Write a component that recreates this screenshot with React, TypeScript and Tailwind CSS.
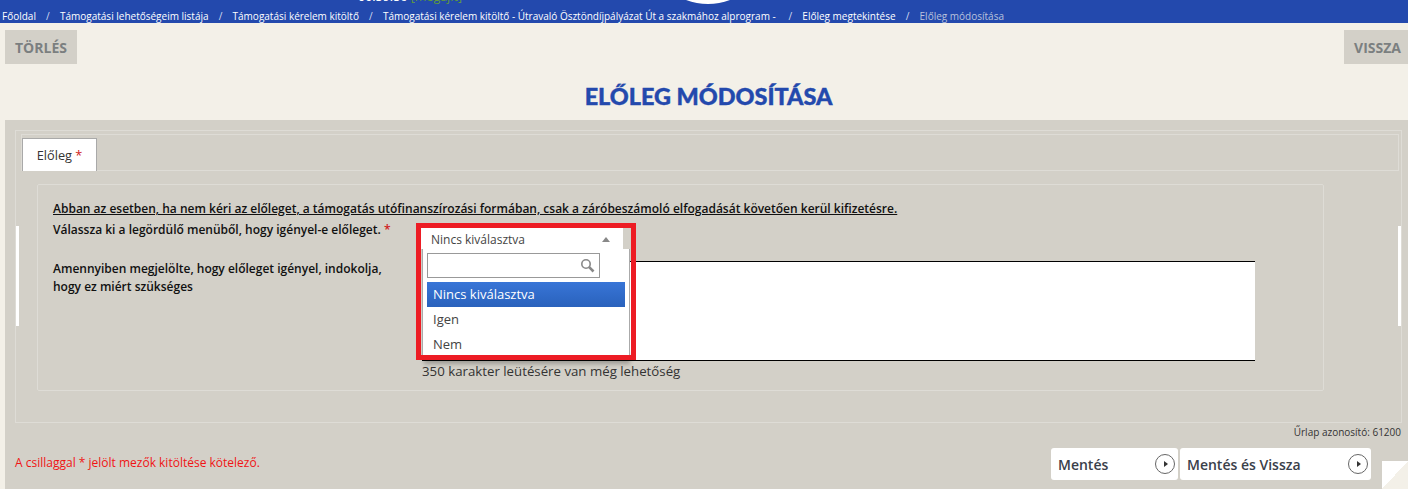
import React from 'react';

const crumbs = [
  'Főoldal',
  'Támogatási lehetőségeim listája',
  'Támogatási kérelem kitöltő',
  'Támogatási kérelem kitöltő - Útravaló Ösztöndíjpályázat Út a szakmához alprogram -\u00a0',
  'Előleg megtekintése',
];

function SaveButton({ label, width }: { label: string; width: string }) {
  return (
    <button className={`${width} h-8 bg-white rounded-[3px] flex items-center justify-between pl-[7px] pr-[3px] text-[14px] font-semibold text-[#3a404a]`}>
      <span>{label}</span>
      <span className="w-5 h-5 rounded-full border border-[#666] flex items-center justify-center">
        <span className="w-0 h-0 border-y-[3px] border-y-transparent border-l-[4px] border-l-[#333] ml-px" />
      </span>
    </button>
  );
}

export default function App() {
  return (
    <div className="relative w-[1408px] h-[489px] overflow-hidden bg-[#f3f0e8] font-['Open_Sans',sans-serif] text-[#222]">
      {/* top bar, the rest is scrolled off */}
      <div className="relative h-[23px] bg-[#2349ad] overflow-hidden">
        <div className="absolute left-[358px] top-[-12px] text-[12.5px] text-white whitespace-nowrap">
          00:59:56 <span className="text-[#5f9a3c]">[megajit]</span>
        </div>
        <div className="absolute left-[646px] top-[-120px] w-[124px] h-[124px] rounded-full bg-white" />
        <div className="flex items-center pl-[2px] pt-[9px] h-[23px] text-[10px] leading-[13px] text-white whitespace-nowrap">
          {crumbs.map((c) => (
            <React.Fragment key={c}>
              <span>{c}</span>
              <span className="w-[24px] text-center text-[#d5dcf0]">/</span>
            </React.Fragment>
          ))}
          <span className="text-[#b9c2dc]">Előleg módosítása</span>
        </div>
      </div>

      <div className="flex justify-between pl-[5px] pt-[7px]">
        <div className="w-[72px] h-[34px] bg-[#d3d0c8] flex items-center justify-center text-[14px] font-bold text-[#7b7f80]">TÖRLÉS</div>
        <div className="w-[64px] h-[34px] bg-[#d3d0c8] flex items-center justify-center pl-[3px] text-[14px] font-bold text-[#7b7f80]">VISSZA</div>
      </div>

      <h1 className="h-[56px] pt-[10px] flex items-center justify-center pl-[9px] font-['Lato',sans-serif] font-black text-[23.4px] text-[#2349ad] [-webkit-text-stroke:0.4px_#2349ad]">
        ELŐLEG MÓDOSÍTÁSA
      </h1>

      <div className="relative ml-[5px] h-[369px] bg-[#d3d0c8] pt-[10px]">
        <div className="relative ml-[10px] w-[1387px] h-[293px] border border-[#dedcd6] pt-[3px]">
          {/* white handles at the edges of the fieldset */}
          <div className="absolute left-0 top-[95px] w-[3px] h-[100px] bg-white" />
          <div className="absolute right-0 top-[95px] w-[3px] h-[100px] bg-white" />

          {/* tab strip */}
          <div className="ml-[5px] w-[1378px] h-[37px] border border-[#dedcd6] pt-[3px]">
            <div className="w-[75px] h-[33px] pt-[2px] bg-white border border-[#a9a9a9] border-b-0 flex items-center justify-center text-[12.75px] text-[#333]">
              <span>Előleg <span className="text-[#d01c1c]">*</span></span>
            </div>
          </div>

          {/* form box */}
          <div className="relative ml-[21px] mt-[13px] w-[1287px] h-[207px] border border-[#dedcd6] rounded-[2px] pl-[15px] pt-[14px] text-[12px] font-semibold">
            <div className="h-[21px] leading-[20px] underline whitespace-nowrap text-[#111]">
              Abban az esetben, ha nem kéri az előleget, a támogatás utófinanszírozási formában, csak a záróbeszámoló elfogadását követően kerül kifizetésre.
            </div>
            <div className="h-[20px] leading-[20px] whitespace-nowrap text-[#111]">
              Válassza ki a legördülő menüből, hogy igényel-e előleget. <span className="text-[#d01c1c]">*</span>
            </div>
            <div className="mt-[20px] leading-[18px] text-[#111]">
              Amennyiben megjelölte, hogy előleget igényel, indokolja,
              <br />
              hogy ez miért szükséges
            </div>

            {/* textarea behind the open dropdown */}
            <div className="absolute left-[384px] top-[76px] w-[833px] h-[100px] bg-white border-y border-black" />
            <div className="absolute left-[384px] top-[177px] text-[13.25px] font-normal text-[#333] whitespace-nowrap">
              350 karakter leütésére van még lehetőség
            </div>

            {/* list shadow shows under the red frame */}
            <div className="absolute left-[386px] top-[165px] w-[206px] h-[11px] shadow-[0_3px_4px_rgba(0,0,0,0.25)]" />

            {/* chosen style select */}
            <div className="absolute left-[378px] top-[38px] w-[220px] h-[137px] border-[5px] border-[#ed1c24] z-10 font-normal">
              <div className="w-[202px] h-[21px] bg-white flex items-center justify-between pl-[10px] pr-[13px] pt-[3px] text-[12px] text-[#444]">
                <span>Nincs kiválasztva</span>
                <span className="w-0 h-0 border-x-[4px] border-x-transparent border-b-[5px] border-b-[#888] mb-[2px]" />
              </div>
              <div className="ml-px w-[208px] h-[106px] bg-white border-x border-[#aaa] px-[4px] pt-[4px] text-[13px] text-[#444]">
                <div className="w-[173px] h-[25px] border border-[#999] flex items-center justify-end pr-[4px]">
                  <svg width="15" height="15" viewBox="0 0 15 15" fill="none" stroke="#888">
                    <circle cx="6" cy="6" r="4.2" strokeWidth="1.6" />
                    <line x1="9.2" y1="9.2" x2="13.5" y2="13.5" strokeWidth="2.6" />
                  </svg>
                </div>
                <div className="mt-[4px] w-[198px] h-[25px] flex items-center pl-[6px] text-white bg-gradient-to-b from-[#3875d7] to-[#2a62bc]">
                  Nincs kiválasztva
                </div>
                <div className="h-[25px] flex items-center pl-[6px]">Igen</div>
                <div className="h-[25px] flex items-center pl-[6px]">Nem</div>
              </div>
            </div>
          </div>
        </div>

        <div className="mt-[2px] w-[1396px] text-right text-[10px] leading-[14px] text-[#333]">Űrlap azonosító: 61200</div>

        <div className="ml-[1046px] mt-[9px] relative flex gap-[2px]">
          <SaveButton label="Mentés" width="w-[127px]" />
          <SaveButton label="Mentés és Vissza" width="w-[191px]" />
        </div>
        <div className="absolute left-[10px] top-[335px] text-[12px] leading-[16px] text-[#f01414]">
          A csillaggal * jelölt mezők kitöltése kötelező.
        </div>
        {/* page corner fold */}
        <div className="absolute left-[1377px] top-[341px] w-[26px] h-[28px] bg-gradient-to-br from-white from-50% to-[#f3f0e8] to-50%" />
      </div>
    </div>
  );
}
